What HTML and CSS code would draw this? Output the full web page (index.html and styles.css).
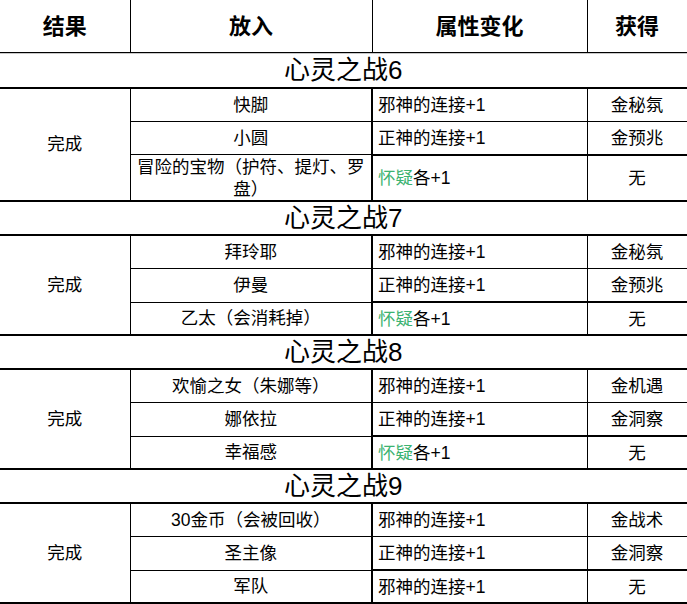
FILE: index.html
```html
<!DOCTYPE html>
<html lang="zh-CN">
<head>
<meta charset="utf-8">
<title>心灵之战</title>
<link rel="stylesheet" href="styles.css">
</head>
<body>
<table class="sheet">
  <colgroup>
    <col class="c1"><col class="c2"><col class="c3"><col class="c4">
  </colgroup>
  <thead>
    <tr class="head">
      <th class="result">结果</th><th>放入</th><th class="attr-h">属性变化</th><th>获得</th>
    </tr>
  </thead>
  <tbody>
    <tr class="title first"><td colspan="4">心灵之战6</td></tr>
    <tr class="row">
      <td rowspan="3" class="result">完成</td>
      <td class="item">快脚</td><td class="attr">邪神的连接+1</td><td class="gain">金秘氛</td>
    </tr>
    <tr class="row">
      <td class="item">小圆</td><td class="attr">正神的连接+1</td><td class="gain">金预兆</td>
    </tr>
    <tr class="row tall last">
      <td class="item">冒险的宝物（护符、提灯、罗<br>盘）</td><td class="attr"><span class="green">怀疑</span>各+1</td><td class="gain">无</td>
    </tr>

    <tr class="title"><td colspan="4">心灵之战7</td></tr>
    <tr class="row">
      <td rowspan="3" class="result">完成</td>
      <td class="item">拜玲耶</td><td class="attr">邪神的连接+1</td><td class="gain">金秘氛</td>
    </tr>
    <tr class="row">
      <td class="item">伊曼</td><td class="attr">正神的连接+1</td><td class="gain">金预兆</td>
    </tr>
    <tr class="row last">
      <td class="item">乙太（会消耗掉）</td><td class="attr"><span class="green">怀疑</span>各+1</td><td class="gain">无</td>
    </tr>

    <tr class="title"><td colspan="4">心灵之战8</td></tr>
    <tr class="row">
      <td rowspan="3" class="result">完成</td>
      <td class="item">欢愉之女（朱娜等）</td><td class="attr">邪神的连接+1</td><td class="gain">金机遇</td>
    </tr>
    <tr class="row">
      <td class="item">娜依拉</td><td class="attr">正神的连接+1</td><td class="gain">金洞察</td>
    </tr>
    <tr class="row last">
      <td class="item">幸福感</td><td class="attr"><span class="green">怀疑</span>各+1</td><td class="gain">无</td>
    </tr>

    <tr class="title"><td colspan="4">心灵之战9</td></tr>
    <tr class="row">
      <td rowspan="3" class="result">完成</td>
      <td class="item">30金币（会被回收）</td><td class="attr">邪神的连接+1</td><td class="gain">金战术</td>
    </tr>
    <tr class="row">
      <td class="item">圣主像</td><td class="attr">正神的连接+1</td><td class="gain">金洞察</td>
    </tr>
    <tr class="row last">
      <td class="item">军队</td><td class="attr">邪神的连接+1</td><td class="gain">无</td>
    </tr>
  </tbody>
</table>
</body>
</html>
```
FILE: styles.css
```css
html, body {
  margin: 0;
  padding: 0;
  background: #ffffff;
}

body {
  font-family: "Liberation Sans", "Noto Sans CJK SC", sans-serif;
  color: #000;
}

.sheet {
  border-collapse: collapse;
  table-layout: fixed;
  width: 687px;
}

.c1 { width: 130px; }
.c2 { width: 242px; }
.c3 { width: 215px; }
.c4 { width: 100px; }

.sheet th,
.sheet td {
  border: 1px solid #000;
  padding: 0 4px;
  text-align: center;
  vertical-align: middle;
  font-size: 17.5px;
  line-height: 22px;
  font-weight: normal;
  overflow: hidden;
}

.head th {
  height: 52px;
  font-size: 22px;
  font-weight: bold;
  border-top: none;
  padding-top: 3px;
  box-sizing: border-box;
}

.head th.result {
  border-left: none;
}

.title td {
  height: 32px;
  font-size: 26px;
  line-height: 30px;
  border-left: none;
  border-right: 1px solid #d4d4d4;
  border-top: 2px solid #000;
  border-bottom: 2px solid #000;
}

.title.first td {
  border-top: 1px solid #000;
  height: 34px;
  box-shadow: inset 0 1px 0 #c8c8c8;
}

.row td {
  height: 32px;
}

.row.last td {
  height: 31px;
}

.row.tall td {
  height: 43px;
}

.row td.result {
  border-left: none;
  border-bottom: 2px solid #000;
}

.row td.attr {
  text-align: left;
  padding-left: 5px;
  border-left: 2px solid #000;
}

.row.last td {
  border-bottom: 2px solid #000;
}

.row.last td.attr,
.row.last td.gain {
  border-top: 2px solid #000;
}

.row.tall td.item {
  line-height: 22px;
  padding-top: 1px;
}

.green {
  color: #3cb371;
}
```
